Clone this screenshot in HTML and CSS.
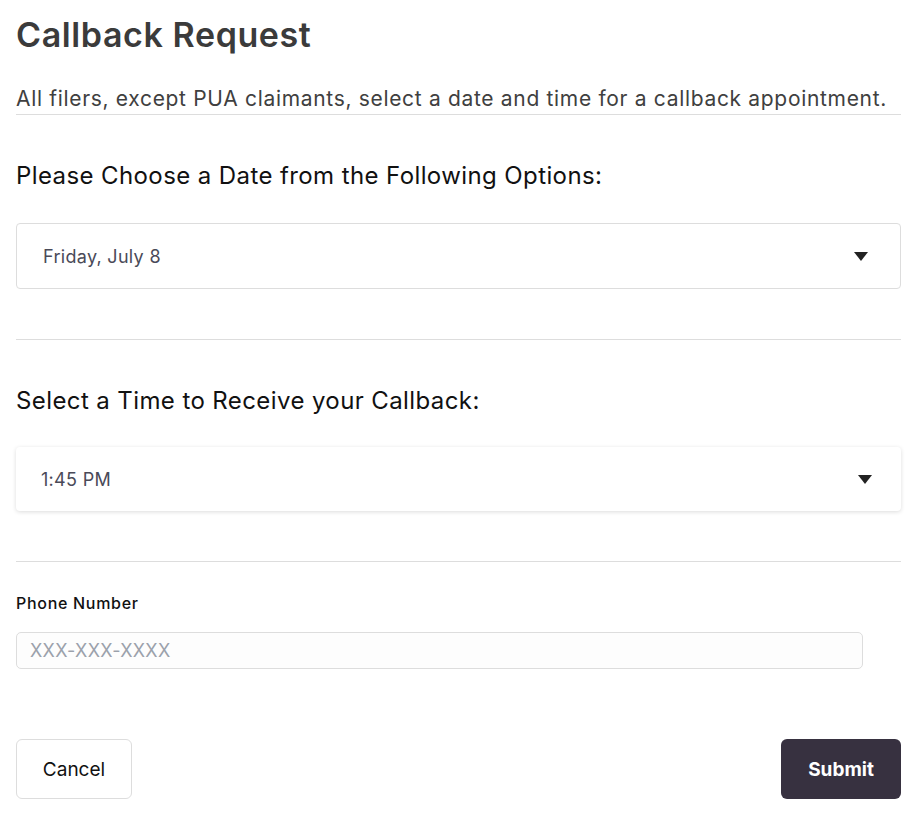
FILE: index.html
```html
<!DOCTYPE html>
<html>
<head>
<meta charset="utf-8">
<link rel="stylesheet" href="styles.css">
</head>
<body>
<div class="page">
  <h1 class="title">Callback Request</h1>
  <p class="intro">All filers, except PUA claimants, select a date and time for a callback appointment.</p>

  <section class="section">
    <h2 class="question">Please Choose a Date from the Following Options:</h2>
    <div class="select bordered">
      <span class="select-value">Friday, July 8</span>
      <svg class="caret" width="14" height="9" viewBox="0 0 14 9"><path d="M0 0H14L7 9Z" fill="#222"/></svg>
    </div>
  </section>

  <section class="section">
    <h2 class="question">Select a Time to Receive your Callback:</h2>
    <div class="select shadowed">
      <span class="select-value time">1:45 PM</span>
      <svg class="caret" width="14" height="9" viewBox="0 0 14 9"><path d="M0 0H14L7 9Z" fill="#222"/></svg>
    </div>
  </section>

  <div class="field">
    <label class="field-label">Phone Number</label>
    <input class="field-input" type="text" placeholder="XXX-XXX-XXXX">
  </div>

  <div class="actions">
    <button class="btn btn-cancel">Cancel</button>
    <button class="btn btn-submit">Submit</button>
  </div>
</div>
</body>
</html>
```

FILE: styles.css
```css
* { box-sizing: border-box; }
body {
  margin: 0;
  background: #fff;
  font-family: "Inter", "Noto Sans", sans-serif;
}
.page {
  padding: 0 4px 0 16px;
}
.title {
  margin: 0;
  padding-top: 15px;
  font-size: 34px;
  line-height: 40px;
  font-weight: 600;
  letter-spacing: 0.6px;
  color: #3b3b3b;
}
.intro {
  margin: 0;
  padding-top: 30px;
  padding-bottom: 1px;
  font-size: 21px;
  line-height: 28px;
  letter-spacing: 0.68px;
  color: #404040;
  border-bottom: 1px solid #ddd;
}
.section {
  border-bottom: 1px solid #ddd;
  padding-bottom: 50px;
}
.question {
  margin: 0;
  padding-top: 46px;
  font-size: 24px;
  line-height: 30px;
  font-weight: 400;
  letter-spacing: 0.4px;
  color: #111;
}
.select {
  margin-top: 32px;
  height: 66px;
  display: flex;
  align-items: center;
  justify-content: space-between;
  padding: 0 32px 0 26px;
  border-radius: 4px;
  background: #fff;
}
.bordered { border: 1px solid #ddd; }
.shadowed {
  margin-top: 31px;
  height: 64px;
  box-shadow: 0 1px 4px rgba(0,0,0,0.14);
  padding-left: 25px;
  padding-right: 29px;
}
.select-value {
  font-size: 18px;
  letter-spacing: 0.3px;
  color: #4a4a58;
}
.caret { display: block; }
.field {
  padding-top: 31px;
}
.field-label {
  display: block;
  font-size: 16px;
  font-weight: 500;
  letter-spacing: 0.7px;
  color: #111;
  line-height: 20px;
}
.field-input {
  display: block;
  margin-top: 19px;
  width: 847px;
  height: 37px;
  border: 1px solid #ddd;
  border-radius: 5px;
  background: #fdfdfd;
  padding: 0 13px;
  font-family: inherit;
  font-size: 18px;
  letter-spacing: 0.3px;
  color: #333;
}
.field-input::placeholder { color: #9ba1ab; }
.actions {
  margin-top: 70px;
  display: flex;
  justify-content: space-between;
}
.btn {
  height: 60px;
  border-radius: 6px;
  font-family: inherit;
  font-size: 19px;
  cursor: pointer;
}
.btn-cancel {
  width: 116px;
  background: #fff;
  border: 1px solid #ddd;
  color: #111;
}
.btn-submit {
  width: 120px;
  background: #373140;
  border: 0;
  color: #fff;
  font-weight: 700;
}
```
